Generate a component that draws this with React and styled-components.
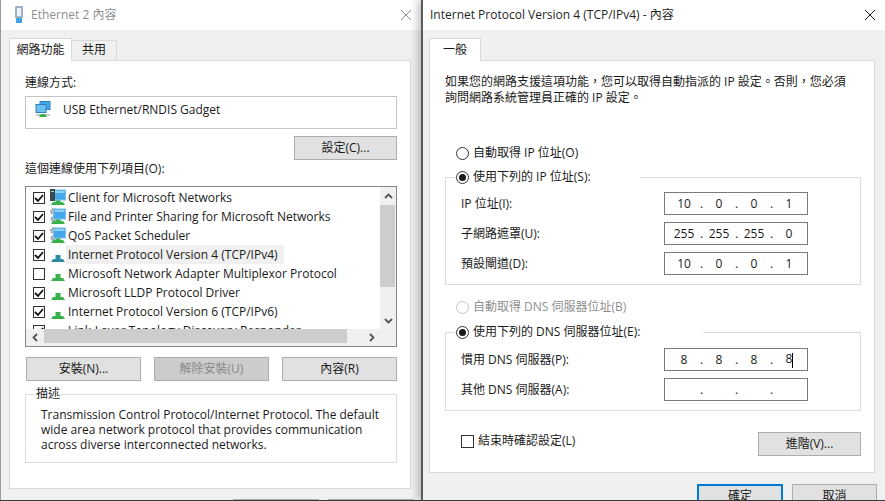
import { Fragment } from "react";
import styled, { createGlobalStyle } from "styled-components";

const GlobalStyle = createGlobalStyle`
  html, body {
    margin: 0;
    padding: 0;
    background: #3a3a3a;
  }
  * {
    box-sizing: border-box;
  }
`;

const Desktop = styled.div`
  display: flex;
  width: 885px;
  height: 500px;
  overflow: hidden;
  font-family: "Open Sans", "Noto Sans CJK TC", sans-serif;
  font-size: 12px;
  line-height: 16px;
  color: #1a1a1a;
`;

const Window = styled.div`
  position: relative;
  display: flex;
  flex-direction: column;
  flex: none;
  width: ${({ $width }) => $width}px;
  height: 500px;
  overflow: hidden;
  background: #f0f0f0;
  border-left: ${({ $front }) => ($front ? "2px solid #5a5a5a" : "1px solid #9a9a9a")};
  box-shadow: ${({ $front }) => ($front ? "-3px 0 8px rgba(0, 0, 0, 0.25)" : "none")};
`;

const TitleBar = styled.div`
  display: flex;
  align-items: center;
  flex: none;
  height: 30px;
  padding: 0 10px 1px ${({ $inset }) => $inset}px;
  background: #fff;
  color: ${({ $dim }) => ($dim ? "#8f8f8f" : "#1f1f1f")};
`;

const TitleText = styled.span`
  flex: 1;
`;

const PlugIcon = styled.svg`
  width: 10px;
  height: 17px;
  margin-right: 7px;
`;

const CloseIcon = styled.svg`
  width: 10px;
  height: 10px;
  stroke: ${({ $dim }) => ($dim ? "#8c8c8c" : "#1a1a1a")};
  stroke-width: 1;
`;

const TabRow = styled.div`
  display: flex;
  align-items: flex-end;
  flex: none;
  height: 30px;
  padding-left: ${({ $left }) => $left}px;
`;

const Tab = styled.div`
  display: flex;
  align-items: center;
  justify-content: center;
  width: ${({ $width }) => $width}px;
  height: ${({ $active }) => ($active ? 23 : 21)}px;
  margin-bottom: -1px;
  padding-bottom: 1px;
  border: 1px solid #d9d9d9;
  border-bottom: ${({ $active }) => ($active ? "none" : "1px solid #d9d9d9")};
  border-left: ${({ $joined }) => ($joined ? "none" : "1px solid #d9d9d9")};
  background: ${({ $active }) => ($active ? "#fff" : "#f0f0f0")};
  position: relative;
  z-index: ${({ $active }) => ($active ? 1 : 0)};
`;

const Panel = styled.div`
  flex: none;
  height: ${({ $height }) => $height}px;
  margin: 0 10px 0 ${({ $left }) => $left}px;
  padding: ${({ $top }) => $top}px 13px 0 15px;
  background: #fff;
  border: 1px solid #d9d9d9;
`;

const Label = styled.div`
  height: 16px;
  margin-top: ${({ $top }) => $top || 0}px;
`;

const ConnectionBox = styled.div`
  display: flex;
  align-items: flex-start;
  height: 33px;
  margin-top: 5px;
  padding: 4px 0 0 9px;
  border: 1px solid #c4c4c4;
`;

const ConnectionName = styled.span`
  margin: 1px 0 0 12px;
`;

const Button = styled.div`
  display: flex;
  align-items: center;
  justify-content: center;
  flex: none;
  width: ${({ $width }) => $width}px;
  height: 24px;
  background: ${({ $disabled }) => ($disabled ? "#cccccc" : "#e1e1e1")};
  border: ${({ $primary }) => ($primary ? "2px solid #0078d7" : "1px solid #adadad")};
  color: ${({ $disabled }) => ($disabled ? "#8a8a8a" : "#1a1a1a")};
`;

const ButtonEnd = styled.div`
  display: flex;
  justify-content: flex-end;
  margin-top: 7px;
`;

const ListBox = styled.div`
  display: flex;
  flex-direction: column;
  height: 161px;
  margin-top: 9px;
  border: 1px solid #828790;
`;

const ListBody = styled.div`
  display: flex;
  flex: none;
  height: 142px;
  overflow: hidden;
`;

const Rows = styled.div`
  flex: 1;
  padding-top: 1px;
`;

const Row = styled.div`
  display: flex;
  align-items: center;
  height: 19px;
  padding-left: 7px;
`;

const Check = styled.span`
  display: flex;
  align-items: center;
  justify-content: center;
  flex: none;
  width: ${({ $size }) => $size || 12}px;
  height: ${({ $size }) => $size || 12}px;
  margin-right: ${({ $gap }) => $gap}px;
  border: 1px solid #333;
  background: #fff;
`;

const CheckMark = styled.svg`
  width: 10px;
  height: 10px;
  fill: none;
  stroke: #111;
  stroke-width: 1.8;
`;

const ItemIcon = styled.svg`
  flex: none;
  width: 16px;
  height: 17px;
`;

const ItemText = styled.span`
  padding: 0 6px 0 2px;
  height: 19px;
  line-height: 19px;
  white-space: nowrap;
  background: ${({ $selected }) => ($selected ? "#f0f0f0" : "transparent")};
`;

const VScroll = styled.div`
  display: flex;
  flex-direction: column;
  flex: none;
  width: 16px;
  background: #f0f0f0;
`;

const ScrollEnd = styled.div`
  display: flex;
  align-items: center;
  justify-content: center;
  flex: none;
  width: ${({ $horizontal }) => ($horizontal ? "18px" : "16px")};
  height: ${({ $horizontal }) => ($horizontal ? "17px" : "18px")};
`;

const VThumb = styled.div`
  flex: none;
  width: 15px;
  height: 82px;
  background: #cdcdcd;
`;

const Spacer = styled.div`
  flex: 1;
`;

const HScroll = styled.div`
  display: flex;
  flex: none;
  height: 17px;
  background: #f0f0f0;
`;

const HThumb = styled.div`
  flex: none;
  width: 303px;
  height: 14px;
  background: #cdcdcd;
`;

const Arrow = styled.svg`
  width: 9px;
  height: 9px;
  fill: none;
  stroke: #555;
  stroke-width: 1.8;
`;

const ScrollCorner = styled.div`
  flex: none;
  width: 16px;
`;

const ButtonRow = styled.div`
  display: flex;
  justify-content: space-between;
  margin-top: 10px;
  padding-left: 1px;
`;

const Group = styled.fieldset`
  display: block;
  min-width: 0;
  margin: ${({ $top }) => $top}px 0 0;
  padding: ${({ $pad }) => $pad};
  border: 1px solid #dcdcdc;
`;

const Legend = styled.legend`
  display: flex;
  align-items: center;
  width: ${({ $width }) => ($width ? `${$width}px` : "auto")};
  height: 16px;
  margin-left: -6px;
  padding: 0 0 0 1px;
`;

const Description = styled.div`
  line-height: 15px;
  white-space: nowrap;
  color: #1a1a1a;
`;

const Footer = styled.div`
  display: flex;
  justify-content: flex-end;
  gap: 9px;
  margin-top: ${({ $top }) => $top}px;
  padding-right: ${({ $right }) => $right}px;
`;

const Intro = styled.p`
  margin: 0;
  white-space: nowrap;
`;

const RadioRow = styled.div`
  display: flex;
  align-items: center;
  height: 16px;
  margin-top: ${({ $top }) => $top}px;
  padding-left: 11px;
  color: ${({ $disabled }) => ($disabled ? "#8f8f8f" : "inherit")};
`;

const Radio = styled.span`
  display: flex;
  align-items: center;
  justify-content: center;
  flex: none;
  width: 13px;
  height: 13px;
  margin-right: 4px;
  border: 1px solid ${({ $disabled }) => ($disabled ? "#c4c4c4" : "#333")};
  border-radius: 50%;
  background: #fff;
  &::after {
    content: "";
    display: ${({ $on }) => ($on ? "block" : "none")};
    width: 7px;
    height: 7px;
    border-radius: 50%;
    background: #1a1a1a;
  }
`;

const FieldRow = styled.div`
  display: flex;
  align-items: center;
  justify-content: space-between;
  height: 23px;
  margin-top: ${({ $first }) => ($first ? 0 : 7)}px;
  padding-right: 52px;
`;

const IpField = styled.div`
  display: flex;
  align-items: center;
  width: 144px;
  height: 23px;
  padding-left: 5px;
  border: 1px solid #7a7a7a;
  background: #fff;
`;

const Octet = styled.span`
  width: 28px;
  text-align: center;
`;

const Dot = styled.span`
  width: 7px;
  text-align: center;
`;

const Caret = styled.span`
  display: inline-block;
  width: 1px;
  height: 15px;
  margin-right: -1px;
  vertical-align: middle;
  background: #000;
`;

const ConfirmRow = styled.div`
  display: flex;
  align-items: flex-start;
  justify-content: space-between;
  height: 24px;
  margin-top: 21px;
  padding-left: 16px;
`;

const ConfirmLabel = styled.div`
  display: flex;
  align-items: center;
  margin-top: 1px;
`;

const networkItems = [
  { name: "Client for Microsoft Networks", kind: "client", on: true },
  { name: "File and Printer Sharing for Microsoft Networks", kind: "service", on: true },
  { name: "QoS Packet Scheduler", kind: "service", on: true },
  { name: "Internet Protocol Version 4 (TCP/IPv4)", kind: "protocol", on: true, selected: true },
  { name: "Microsoft Network Adapter Multiplexor Protocol", kind: "protocol", on: false },
  { name: "Microsoft LLDP Protocol Driver", kind: "protocol", on: true },
  { name: "Internet Protocol Version 6 (TCP/IPv6)", kind: "protocol", on: true },
  { name: "Link-Layer Topology Discovery Responder", kind: "protocol", on: true },
];

const Stand = ({ color }) => (
  <>
    <rect x="5.5" y="9" width="5" height="4" fill={color} />
    <path d="M1 16 L3 13 H13 L15 16 Z" fill={color} />
  </>
);

const Screen = () => (
  <>
    <rect x="3.5" y="1" width="12" height="10" fill="#45a8ec" stroke="#7cbfe8" />
    <rect x="4.5" y="2" width="10" height="2" fill="#8fd0f5" />
  </>
);

const NetIcon = ({ kind, selected }) => (
  <ItemIcon viewBox="0 0 16 17">
    <Stand color={selected ? "#2a8ba3" : "#38b24a"} />
    {kind === "client" && (
      <>
        <Screen />
        <rect x="0" y="0" width="5" height="12" fill="#3c4a50" />
        <rect x="1" y="2" width="3" height="1" fill="#9fe0a0" />
      </>
    )}
    {kind === "service" && (
      <>
        <circle cx="3.5" cy="3.5" r="2.5" fill="#c2c6ca" stroke="#8e9498" strokeWidth="2" strokeDasharray="1.5 1" />
        <circle cx="3" cy="11" r="2" fill="#c2c6ca" stroke="#8e9498" strokeWidth="1" />
        <Screen />
      </>
    )}
  </ItemIcon>
);

const TickBox = ({ on, size, gap }) => (
  <Check $size={size} $gap={gap}>
    {on && (
      <CheckMark viewBox="0 0 10 10">
        <path d="M1 5 L4 8 L9 2" />
      </CheckMark>
    )}
  </Check>
);

const Close = ({ dim }) => (
  <CloseIcon $dim={dim} viewBox="0 0 10 10">
    <path d="M0 0 L10 10 M10 0 L0 10" />
  </CloseIcon>
);

const Chevron = ({ d }) => (
  <Arrow viewBox="0 0 9 9">
    <path d={d} />
  </Arrow>
);

const Address = ({ parts, caret }) => (
  <IpField>
    {parts.map((part, i) => (
      <Fragment key={i}>
        {i > 0 && <Dot>.</Dot>}
        <Octet>
          {part}
          {caret && i === 3 && <Caret />}
        </Octet>
      </Fragment>
    ))}
  </IpField>
);

const NetworkWindow = () => (
  <Window $width={421}>
    <TitleBar $inset={13} $dim>
      <PlugIcon viewBox="0 0 10 17">
        <path d="M1 1 Q1 0 2 0 H8 Q9 0 9 1 V12 H1 Z" fill="#9db2c7" />
        <rect x="3" y="2" width="4" height="8" fill="#eef2f6" />
        <rect x="2" y="12" width="6" height="5" fill="#3aa3e3" />
      </PlugIcon>
      <TitleText>Ethernet 2 內容</TitleText>
      <Close dim />
    </TitleBar>
    <TabRow $left={8}>
      <Tab $width={63} $active>網路功能</Tab>
      <Tab $width={45} $joined>共用</Tab>
    </TabRow>
    <Panel $height={429} $left={8} $top={14}>
      <Label>連線方式:</Label>
      <ConnectionBox>
        <ItemIcon viewBox="0 0 16 17">
          <rect x="5" y="0.5" width="10" height="8" fill="#45a8ec" stroke="#2f7fc0" />
          <rect x="1" y="3.5" width="10" height="8" fill="#6fc0f2" stroke="#2f7fc0" />
          <rect x="1" y="13" width="14" height="2" fill="#c8cccc" />
          <path d="M4 16 L6 13 H10 L12 16 Z" fill="#38b24a" />
        </ItemIcon>
        <ConnectionName>USB Ethernet/RNDIS Gadget</ConnectionName>
      </ConnectionBox>
      <ButtonEnd>
        <Button $width={103}>設定(C)...</Button>
      </ButtonEnd>
      <Label $top={1}>這個連線使用下列項目(O):</Label>
      <ListBox>
        <ListBody>
          <Rows>
            {networkItems.map((item) => (
              <Row key={item.name}>
                <TickBox on={item.on} gap={5} />
                <NetIcon kind={item.kind} selected={item.selected} />
                <ItemText $selected={item.selected}>{item.name}</ItemText>
              </Row>
            ))}
          </Rows>
          <VScroll>
            <ScrollEnd>
              <Chevron d="M1 6 L4.5 2.5 L8 6" />
            </ScrollEnd>
            <VThumb />
            <Spacer />
            <ScrollEnd>
              <Chevron d="M1 3 L4.5 6.5 L8 3" />
            </ScrollEnd>
          </VScroll>
        </ListBody>
        <HScroll>
          <ScrollEnd $horizontal>
            <Chevron d="M6 1 L2.5 4.5 L6 8" />
          </ScrollEnd>
          <HThumb />
          <Spacer />
          <ScrollEnd $horizontal>
            <Chevron d="M3 1 L6.5 4.5 L3 8" />
          </ScrollEnd>
          <ScrollCorner />
        </HScroll>
      </ListBox>
      <ButtonRow>
        <Button $width={115}>安裝(N)...</Button>
        <Button $width={115} $disabled>解除安裝(U)</Button>
        <Button $width={115}>內容(R)</Button>
      </ButtonRow>
      <Group $top={5} $pad="5px 8px 10px 15px">
        <Legend>描述</Legend>
        <Description>
          Transmission Control Protocol/Internet Protocol. The default
          <br />
          wide area network protocol that provides communication
          <br />
          across diverse interconnected networks.
        </Description>
      </Group>
    </Panel>
    <Footer $top={10} $right={7}>
      <Button $width={86}>確定</Button>
      <Button $width={86}>取消</Button>
    </Footer>
  </Window>
);

const Ipv4Window = () => (
  <Window $width={464} $front>
    <TitleBar $inset={7}>
      <TitleText>Internet Protocol Version 4 (TCP/IPv4) - 內容</TitleText>
      <Close />
    </TitleBar>
    <TabRow $left={6}>
      <Tab $width={52} $active>一般</Tab>
    </TabRow>
    <Panel $height={413} $left={6} $top={13}>
      <Intro>
        如果您的網路支援這項功能，您可以取得自動指派的 IP 設定。否則，您必須
        <br />
        詢問網路系統管理員正確的 IP 設定。
      </Intro>
      <RadioRow $top={39}>
        <Radio />
        自動取得 IP 位址(O)
      </RadioRow>
      <Group $top={8} $pad="7px 0 9px 15px">
        <Legend $width={185}>
          <Radio $on />
          使用下列的 IP 位址(S):
        </Legend>
        <FieldRow $first>
          IP 位址(I):
          <Address parts={["10", "0", "0", "1"]} />
        </FieldRow>
        <FieldRow>
          子網路遮罩(U):
          <Address parts={["255", "255", "255", "0"]} />
        </FieldRow>
        <FieldRow>
          預設閘道(D):
          <Address parts={["10", "0", "0", "1"]} />
        </FieldRow>
      </Group>
      <RadioRow $top={14} $disabled>
        <Radio $disabled />
        自動取得 DNS 伺服器位址(B)
      </RadioRow>
      <Group $top={9} $pad="8px 0 9px 15px">
        <Legend $width={248}>
          <Radio $on />
          使用下列的 DNS 伺服器位址(E):
        </Legend>
        <FieldRow $first>
          慣用 DNS 伺服器(P):
          <Address parts={["8", "8", "8", "8"]} caret />
        </FieldRow>
        <FieldRow>
          其他 DNS 伺服器(A):
          <Address parts={["", "", "", ""]} />
        </FieldRow>
      </Group>
      <ConfirmRow>
        <ConfirmLabel>
          <TickBox size={13} gap={4} />
          結束時確認設定(L)
        </ConfirmLabel>
        <Button $width={103}>進階(V)...</Button>
      </ConfirmRow>
    </Panel>
    <Footer $top={11} $right={8}>
      <Button $width={86} $primary>確定</Button>
      <Button $width={85}>取消</Button>
    </Footer>
  </Window>
);

export default function App() {
  return (
    <>
      <GlobalStyle />
      <Desktop>
        <NetworkWindow />
        <Ipv4Window />
      </Desktop>
    </>
  );
}
